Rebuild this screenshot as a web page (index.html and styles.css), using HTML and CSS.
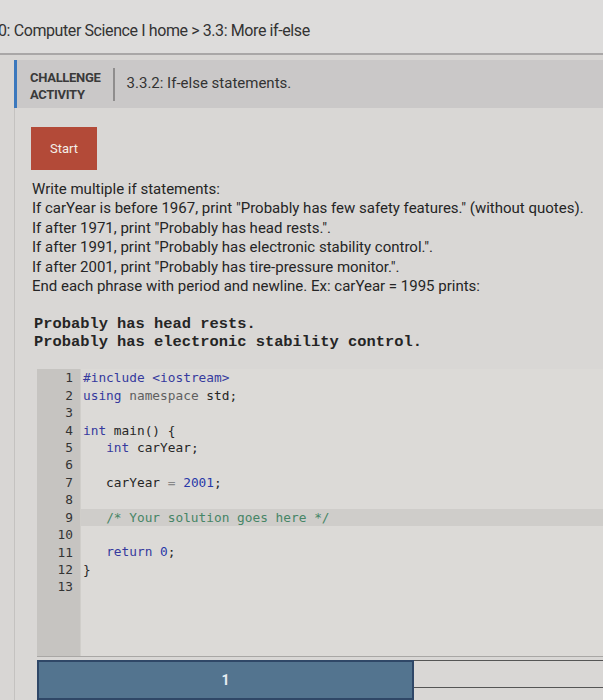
FILE: index.html
```html
<!DOCTYPE html>
<html>
<head>
<meta charset="utf-8">
<link rel="stylesheet" href="styles.css">
</head>
<body>
<div class="crumb">0: Computer Science I home &gt; 3.3: More if-else</div>
<div class="card">
  <div class="head">
    <div class="tag">CHALLENGE<br>ACTIVITY</div>
    <div class="divider"></div>
    <div class="title">3.3.2: If-else statements.</div>
  </div>
  <div class="body">
    <button class="start">Start</button>
    <div class="desc">
      <div>Write multiple if statements:</div>
      <div>If carYear is before 1967, print "Probably has few safety features." (without quotes).</div>
      <div>If after 1971, print "Probably has head rests.".</div>
      <div>If after 1991, print "Probably has electronic stability control.".</div>
      <div>If after 2001, print "Probably has tire-pressure monitor.".</div>
      <div>End each phrase with period and newline. Ex: carYear = 1995 prints:</div>
    </div>
    <div class="output">
      <div>Probably has head rests.</div>
      <div>Probably has electronic stability control.</div>
    </div>
    <div class="editor">
      <div class="gutter">
        <div>1</div><div>2</div><div>3</div><div>4</div><div>5</div><div>6</div><div>7</div><div>8</div><div>9</div><div>10</div><div>11</div><div>12</div><div>13</div>
      </div>
      <div class="code">
        <div class="ln"><span class="kw">#include</span> <span class="kw">&lt;iostream&gt;</span></div>
        <div class="ln"><span class="kw">using</span> <span class="ns">namespace</span> std;</div>
        <div class="ln"> </div>
        <div class="ln"><span class="kw">int</span> main() {</div>
        <div class="ln">   <span class="kw">int</span> carYear;</div>
        <div class="ln"> </div>
        <div class="ln">   carYear <span class="op">=</span> <span class="num">2001</span>;</div>
        <div class="ln"> </div>
        <div class="ln active">   <span class="cm">/* Your solution goes here */</span></div>
        <div class="ln"> </div>
        <div class="ln">   <span class="kw">return</span> <span class="num">0</span>;</div>
        <div class="ln">}</div>
        <div class="ln"> </div>
      </div>
    </div>
    <div class="progress">
      <div class="seg done">1</div>
      <div class="seg next"></div>
    </div>
  </div>
</div>
</body>
</html>
```

FILE: styles.css
```css
html, body {
  margin: 0;
  padding: 0;
}
body {
  width: 603px;
  height: 700px;
  overflow: hidden;
  background: #d8d6d4;
  font-family: Roboto, "Liberation Sans", sans-serif;
  color: #2a2a2a;
}
.crumb {
  height: 55px;
  box-sizing: border-box;
  padding-top: 21px;
  font-size: 16px;
  letter-spacing: -0.4px;
  text-indent: -2px;
  color: #333;
  background: #dddcdb;
  border-bottom: 2px solid #a9a7a7;
}
.card {
  margin-top: 5px;
  margin-left: 14px;
  border-left: 1px solid #c4c2c0;
}
.head {
  height: 48px;
  display: flex;
  align-items: center;
  background: #cac8c8;
  border-left: 3px solid #3b78bd;
  margin-left: -1px;
}
.tag {
  margin-left: 13px;
  margin-top: 3px;
  font-size: 13px;
  font-weight: bold;
  line-height: 17px;
  color: #3a3a3a;
  letter-spacing: -0.3px;
}
.divider {
  width: 2px;
  height: 33px;
  background: #8f8d8d;
  margin-left: 12px;
}
.title {
  margin-left: 12px;
  margin-top: -3px;
  font-size: 15px;
  color: #333;
}
.body {
  background: #d9d7d5;
  padding-top: 19px;
}
.start {
  display: block;
  margin-left: 16px;
  width: 66px;
  height: 43px;
  background: #b34a38;
  color: #f4efe9;
  border: none;
  font-family: Roboto, "Liberation Sans", sans-serif;
  font-size: 13px;
  padding: 0;
}
.desc {
  margin-left: 17px;
  margin-top: 10px;
  font-size: 15px;
  line-height: 19.4px;
  color: #252525;
}
.output {
  margin-left: 19px;
  margin-top: 19px;
  font-family: "Liberation Mono", monospace;
  font-weight: bold;
  font-size: 15.4px;
  line-height: 18px;
  color: #252525;
}
.editor {
  margin-top: 18px;
  margin-left: 22px;
  height: 287px;
  display: flex;
  background: #dcdad7;
  border-bottom: 1px solid #a9a7a5;
  font-family: "DejaVu Sans Mono", monospace;
  font-size: 12.8px;
  line-height: 17.4px;
}
.gutter {
  width: 36px;
  padding-right: 7px;
  background: #c6c4c1;
  text-align: right;
  color: #333;
  border-right: 1px solid #d0ceca;
}
.code {
  flex: 1;
  padding-left: 2px;
  color: #262626;
}
.ln {
  white-space: pre;
  height: 17.4px;
}
.ln.active {
  background: #cfcdca;
  margin-left: -2px;
  padding-left: 2px;
}
.kw { color: #363a9e; }
.ns { color: #5f5f5f; }
.num { color: #2838a8; }
.op { color: #888; }
.cm { color: #468566; }
.progress {
  margin-top: 3px;
  margin-left: 22px;
  display: flex;
  align-items: flex-start;
}
.seg {
  box-sizing: border-box;
}
.seg.done {
  width: 377px;
  height: 40px;
  background: #53748f;
  border: 2px solid #2f4767;
  color: #e8eef2;
  font-weight: bold;
  font-size: 14px;
  display: flex;
  align-items: center;
  justify-content: center;
}
.seg.next {
  flex: 1;
  height: 28px;
  border-top: 1px solid #555;
  border-bottom: 1px solid #555;
}
```
